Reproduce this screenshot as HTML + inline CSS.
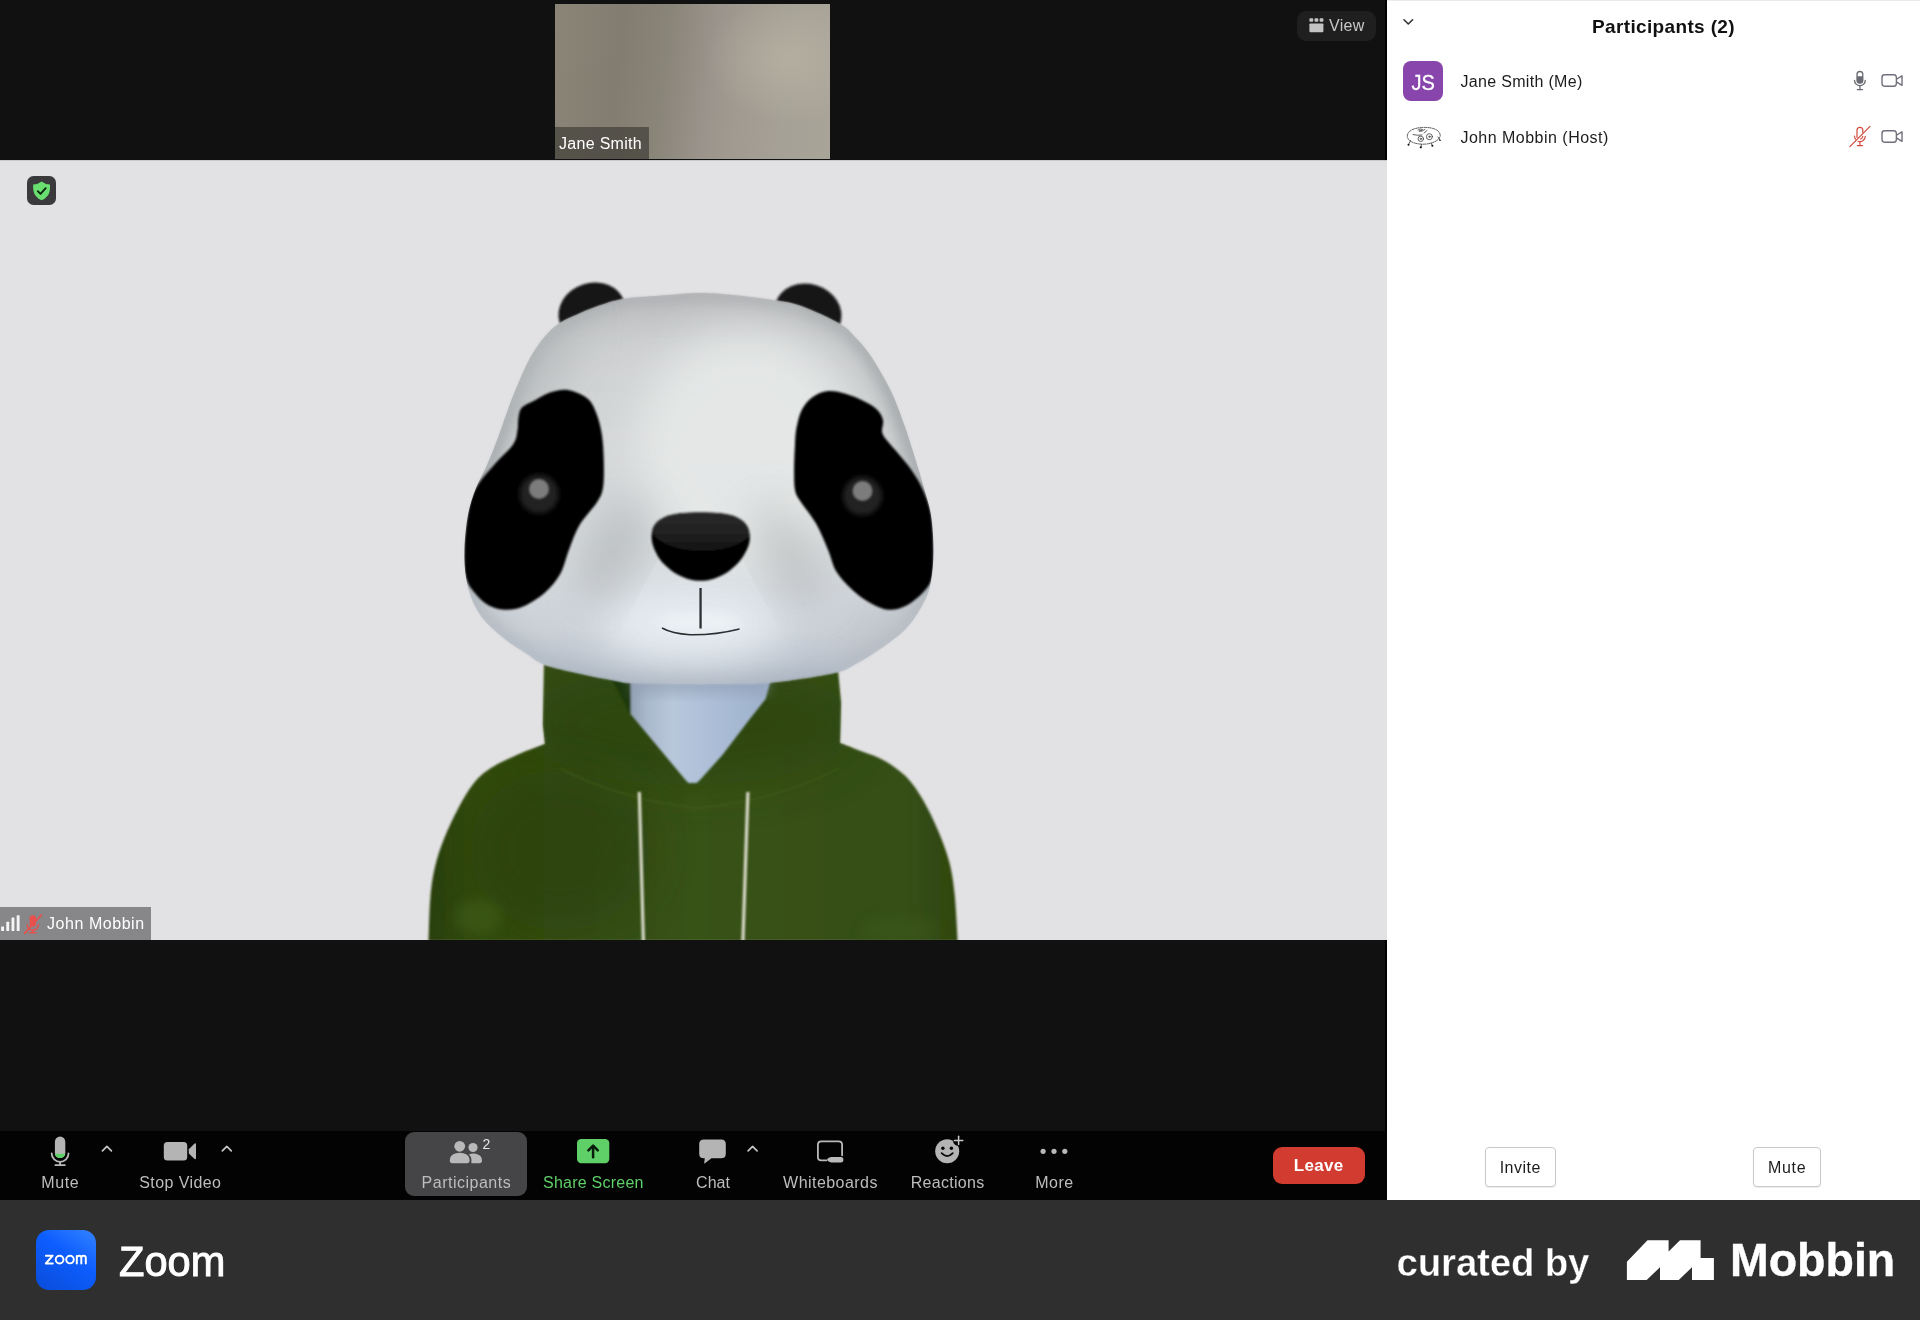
<!DOCTYPE html>
<html>
<head>
<meta charset="utf-8">
<title>Zoom</title>
<style>
*{box-sizing:border-box;margin:0;padding:0}
html,body{width:1920px;height:1320px;overflow:hidden;background:#2f2f2f;font-family:"Liberation Sans",sans-serif;}
.abs{position:absolute}
#stage,#panel,#footer,.pbtn2{will-change:transform}
#stage{position:absolute;left:0;top:0;width:1387px;height:1200px;background:#111111;overflow:hidden}
#video{position:absolute;left:0;top:160px;width:1387px;height:780px;background:#e2e1e3;overflow:hidden}
#thumb{position:absolute;left:555px;top:4px;width:275px;height:155px;background:linear-gradient(97deg,#8b8578 0%,#837d71 24%,#8a8579 40%,#9a948c 56%,#a09a90 66%,#a6a196 82%,#a9a498 100%);overflow:hidden}
#thumb .glow{position:absolute;left:150px;top:-10px;width:170px;height:130px;background:radial-gradient(ellipse at center,rgba(179,175,160,.95) 0%,rgba(179,175,160,0) 70%)}
#thumb .lbl{position:absolute;left:0;bottom:0;width:94px;height:32px;background:rgba(72,70,64,.8);color:#fff;font-size:16px;line-height:33px;padding-left:4px;white-space:nowrap;letter-spacing:.3px}
#viewbtn{position:absolute;left:1297px;top:11px;width:79px;height:30px;border-radius:9px;background:#1f1f1f;color:#c8c8c8;font-size:16px;line-height:29px}
#viewbtn span{position:absolute;left:32px;top:0;letter-spacing:.33px}
#shield{position:absolute;left:26.6px;top:176px;width:29.2px;height:29.2px;border-radius:6.5px;background:#3a3a3c}
#jm{position:absolute;left:0;top:907px;width:151px;height:33px;background:rgba(120,119,121,.86);color:#fff;font-size:16px;line-height:33px;white-space:nowrap}
#jm span{position:absolute;left:47px;top:0;letter-spacing:.55px}
#toolbar{position:absolute;left:0;top:1131px;width:1387px;height:69px;background:#030303}
.tb{position:absolute;color:#bdbdbd;font-size:16px;white-space:nowrap;line-height:18px;top:43px;transform:translateX(-50%)}
#panel{position:absolute;left:1387px;top:0;width:533px;height:1200px;background:#fff}
#footer{position:absolute;left:0;top:1200px;width:1920px;height:120px;background:#2f2f2f}

.tbi{position:absolute}
#pbtn{position:absolute;left:405px;top:1px;width:122px;height:64px;border-radius:9px;background:#454547}
#leave{position:absolute;left:1272.5px;top:15.5px;width:92.3px;height:37.5px;border-radius:9px;background:#d23b30;color:#fff;font-weight:bold;font-size:17px;line-height:37px;text-align:center;letter-spacing:.3px}
#ptitle{position:absolute;left:0;width:533px;top:15px;text-align:center;font-weight:bold;font-size:19px;line-height:24px;color:#111;white-space:nowrap;padding-left:20px;letter-spacing:.35px}
.prow{position:absolute;left:0;width:533px;height:56px}
.pname{position:absolute;left:73.5px;top:21.2px;font-size:16px;line-height:18px;color:#1c1c1e;white-space:nowrap;letter-spacing:.25px}
#av1{position:absolute;left:16px;top:8.5px;width:40px;height:40px;border-radius:8px;background:#8845ab;color:#fff;font-size:22.6px;line-height:43.4px;text-align:center;-webkit-text-stroke:.3px #fff}
#av1 span{display:inline-block;transform:scaleX(.888)}
.pbtn2{position:absolute;top:1147px;height:39.6px;border:1px solid #c9c9c9;border-radius:4px;background:#fff;font-size:16px;line-height:39.6px;text-align:center;color:#1c1c1e;box-shadow:0 1px 1px rgba(0,0,0,.08)}
#zlogo{position:absolute;left:36px;top:30px;width:60px;height:60px;border-radius:13px;background:linear-gradient(215deg,#3583ff 0%,#0d5eff 42%,#0a4cd8 100%)}
#ztext{position:absolute;left:118.5px;top:38.5px;font-size:42px;line-height:46px;color:#fff;-webkit-text-stroke:.95px #fff;transform:scaleX(.99);transform-origin:0 0}
#curated{position:absolute;left:1396.6px;top:40px;font-size:38.5px;line-height:46px;color:#fff;font-weight:bold;-webkit-text-stroke:.4px #2f2f2f;letter-spacing:-.2px;white-space:nowrap}
#mobbin{-webkit-text-stroke:.4px #fff;position:absolute;left:1729.6px;top:33.8px;font-size:47px;line-height:52px;color:#fff;font-weight:bold;white-space:nowrap;transform:scaleX(.989);transform-origin:0 0}
</style>
</head>
<body>
<div id="stage">
  <div id="thumb"><div class="glow"></div><div class="lbl">Jane Smith</div></div>
  <div id="viewbtn"><svg class="abs" style="left:11.5px;top:7px" width="16" height="16" viewBox="0 0 16 16"><g fill="#c4c4c4"><rect x=".4" y=".2" width="3.800" height="3.600" rx=".8"/><rect x="5.500" y=".2" width="3.800" height="3.600" rx=".8"/><rect x="10.600" y=".2" width="3.800" height="3.600" rx=".8"/><rect x=".4" y="5.400" width="14" height="8.800" rx=".9"/></g></svg><span>View</span></div>
  <div id="video"><div style="position:absolute;left:0;top:0;width:1387px;height:1px;background:#c9c8cb"></div></div>
  <svg id="panda" class="abs" style="left:0;top:160px" width="1387" height="780" viewBox="0 160 1387 780">
<defs>
<filter id="b05" x="-50%" y="-10%" width="200%" height="120%"><feGaussianBlur stdDeviation="0.5"/></filter>
<filter id="b1" x="-20%" y="-20%" width="140%" height="140%"><feGaussianBlur stdDeviation="0.8"/></filter>
<filter id="b2" x="-30%" y="-30%" width="160%" height="160%"><feGaussianBlur stdDeviation="2.5"/></filter>
<filter id="b6" x="-30%" y="-30%" width="160%" height="160%"><feGaussianBlur stdDeviation="6"/></filter>
<filter id="b20" x="-50%" y="-50%" width="200%" height="200%"><feGaussianBlur stdDeviation="22"/></filter>
<linearGradient id="gHead" x1="0" y1="293" x2="0" y2="684" gradientUnits="userSpaceOnUse">
<stop offset="0" stop-color="#bcbcbe"/><stop offset="0.04" stop-color="#c8c9ca"/><stop offset="0.15" stop-color="#d0d2d3"/><stop offset="0.45" stop-color="#d5d8d9"/><stop offset="0.7" stop-color="#d6dadd"/><stop offset="0.86" stop-color="#d0d6dd"/><stop offset="0.95" stop-color="#c2cbd7"/><stop offset="1" stop-color="#b2bdcc"/>
</linearGradient>
<linearGradient id="gHood" x1="428" y1="0" x2="958" y2="0" gradientUnits="userSpaceOnUse">
<stop offset="0" stop-color="#2a400c"/><stop offset="0.1" stop-color="#324b10"/><stop offset="0.5" stop-color="#385216"/><stop offset="0.9" stop-color="#364f15"/><stop offset="1" stop-color="#2f4610"/>
</linearGradient>
<linearGradient id="gNeck" x1="630" y1="0" x2="770" y2="0" gradientUnits="userSpaceOnUse">
<stop offset="0" stop-color="#92a0b3"/><stop offset="0.12" stop-color="#a9b8cc"/><stop offset="0.3" stop-color="#b8c7da"/><stop offset="0.5" stop-color="#b0c1d9"/><stop offset="0.75" stop-color="#a6b9d3"/><stop offset="1" stop-color="#9db0ca"/>
</linearGradient>
<radialGradient id="gNose" cx="703" cy="520" r="50" gradientTransform="translate(0 260) scale(1 .5)" gradientUnits="userSpaceOnUse">
<stop offset="0" stop-color="#343434"/><stop offset="0.55" stop-color="#242424"/><stop offset="0.8" stop-color="#0c0c0c"/><stop offset="1" stop-color="#000"/>
</radialGradient>
<linearGradient id="gRim" x1="0" y1="293" x2="0" y2="684" gradientUnits="userSpaceOnUse"><stop offset="0" stop-color="#b4b6b8"/><stop offset=".12" stop-color="#a6aaac"/><stop offset=".3" stop-color="#9da2a4"/><stop offset=".62" stop-color="#9fa4a7"/><stop offset=".85" stop-color="#aab3bf" stop-opacity=".7"/><stop offset="1" stop-color="#aeb9c8" stop-opacity=".45"/></linearGradient>
<clipPath id="cHead"><path d="M700.0 293.0 C710.9 292.9 719.3 293.8 732.0 295.0 C744.7 296.2 764.3 298.6 776.0 300.5 C787.7 302.4 791.3 302.7 802.0 306.6 C812.7 310.5 831.3 319.1 840.0 324.0 C848.7 328.9 849.3 331.3 854.0 336.0 C858.7 340.7 863.7 346.2 868.0 352.0 C872.3 357.8 875.8 363.8 880.0 371.0 C884.2 378.2 888.8 386.2 893.0 395.5 C897.2 404.8 901.3 416.6 905.0 427.0 C908.7 437.4 911.8 447.8 915.0 458.0 C918.2 468.2 921.3 478.5 924.0 488.0 C926.7 497.5 929.4 504.7 931.0 515.0 C932.6 525.3 933.5 539.0 933.5 550.0 C933.5 561.0 932.6 572.3 931.0 581.0 C929.4 589.7 928.1 594.2 924.0 602.0 C919.9 609.8 913.8 620.2 906.5 628.0 C899.2 635.8 888.8 642.8 880.0 649.0 C871.2 655.2 860.9 661.2 854.0 665.0 C847.1 668.8 847.3 669.7 838.6 672.0 C829.9 674.3 813.9 676.8 802.0 678.6 C790.1 680.4 780.7 682.1 767.0 683.0 C753.3 683.9 734.5 683.8 720.0 684.0 C705.5 684.2 694.7 684.2 680.0 684.0 C665.3 683.8 643.0 683.6 632.0 683.0 C621.0 682.4 622.8 682.0 614.0 680.4 C605.2 678.8 591.0 676.0 579.4 673.4 C567.8 670.8 553.2 667.9 544.5 664.7 C535.8 661.5 533.4 658.1 527.0 654.0 C520.6 649.9 513.0 645.5 506.0 640.0 C499.0 634.5 490.5 627.3 485.0 621.0 C479.5 614.7 476.2 609.2 473.0 602.0 C469.8 594.8 467.4 586.3 466.0 577.6 C464.6 568.9 464.1 560.2 464.4 549.7 C464.7 539.2 466.1 525.1 468.0 514.8 C469.9 504.5 472.8 496.3 476.0 488.0 C479.2 479.7 483.4 473.2 487.0 465.0 C490.6 456.8 494.0 448.3 497.5 439.0 C501.0 429.7 504.5 418.7 508.0 409.4 C511.5 400.1 514.6 392.0 518.4 383.3 C522.2 374.6 526.2 364.7 530.6 357.0 C535.0 349.3 539.9 342.5 544.5 337.0 C549.1 331.5 553.2 327.6 558.5 324.0 C563.8 320.4 569.6 318.2 576.0 315.3 C582.4 312.4 588.9 309.4 597.0 306.6 C605.1 303.9 613.1 300.7 624.7 298.8 C636.3 296.9 654.0 296.3 666.5 295.3 C679.0 294.3 689.1 293.1 700.0 293.0Z"/></clipPath>
<clipPath id="cHood"><path d="M544 664 L543 725 L545 744 C540.3 745.8 526.0 751.0 517.0 755.0 C508.0 759.0 498.2 763.3 491.0 768.0 C483.8 772.7 479.3 776.5 474.0 783.0 C468.7 789.5 464.0 797.7 459.0 807.0 C454.0 816.3 448.0 829.0 444.0 839.0 C440.0 849.0 437.3 857.2 435.0 867.0 C432.7 876.8 431.5 885.2 430.4 897.5 C429.3 909.8 428.9 933.8 428.6 941.0 L957.7 941 C957.2 933.0 956.0 906.3 954.5 893.0 C953.0 879.7 951.8 871.4 949.0 861.0 C946.2 850.6 942.3 840.8 938.0 830.6 C933.7 820.4 928.3 809.0 923.0 800.0 C917.7 791.0 912.5 783.2 906.0 776.6 C899.5 770.0 891.2 764.5 884.0 760.4 C876.8 756.3 870.0 754.7 862.7 751.8 C855.4 748.9 843.8 744.5 840.0 743.0 L841 703 L838 670 Z"/></clipPath>
<clipPath id="cNose"><path d="M700.5 512.5 C707.7 512.5 715.8 512.6 722.0 513.5 C728.2 514.4 733.8 515.9 738.0 518.0 C742.2 520.1 745.0 522.8 747.0 526.0 C749.0 529.2 749.6 533.5 749.8 537.0 C750.0 540.5 749.3 543.5 748.0 547.0 C746.7 550.5 744.2 554.8 742.0 558.0 C739.8 561.2 737.9 563.3 735.0 566.0 C732.1 568.7 728.3 571.8 724.5 574.0 C720.7 576.2 716.0 578.1 712.0 579.2 C708.0 580.3 704.3 580.8 700.5 580.8 C696.7 580.8 693.0 580.3 689.0 579.2 C685.0 578.1 680.3 576.2 676.5 574.0 C672.7 571.8 668.9 568.7 666.0 566.0 C663.1 563.3 661.1 561.2 659.0 558.0 C656.9 554.8 654.7 550.5 653.5 547.0 C652.3 543.5 651.5 540.5 651.6 537.0 C651.7 533.5 652.1 529.2 654.0 526.0 C655.9 522.8 658.8 520.1 663.0 518.0 C667.2 515.9 672.8 514.4 679.0 513.5 C685.2 512.6 693.3 512.5 700.5 512.5Z"/></clipPath>
<linearGradient id="gLid" x1="0" y1="512" x2="0" y2="552" gradientUnits="userSpaceOnUse"><stop offset="0" stop-color="#2a2a2a"/><stop offset=".6" stop-color="#1f1f1f"/><stop offset="1" stop-color="#101010"/></linearGradient>
<clipPath id="cVid"><rect x="0" y="160" width="1387" height="780"/></clipPath>
</defs>
<g clip-path="url(#cVid)">
<!-- ears -->
<g filter="url(#b1)">
<ellipse cx="592" cy="312" rx="34" ry="29" fill="#161416" transform="rotate(-18 592 312)"/>
<ellipse cx="808" cy="313" rx="34" ry="29" fill="#161416" transform="rotate(18 808 313)"/>
</g>
<!-- hoodie -->
<g filter="url(#b1)">
<path d="M544 664 L543 725 L545 744 C540.3 745.8 526.0 751.0 517.0 755.0 C508.0 759.0 498.2 763.3 491.0 768.0 C483.8 772.7 479.3 776.5 474.0 783.0 C468.7 789.5 464.0 797.7 459.0 807.0 C454.0 816.3 448.0 829.0 444.0 839.0 C440.0 849.0 437.3 857.2 435.0 867.0 C432.7 876.8 431.5 885.2 430.4 897.5 C429.3 909.8 428.9 933.8 428.6 941.0 L957.7 941 C957.2 933.0 956.0 906.3 954.5 893.0 C953.0 879.7 951.8 871.4 949.0 861.0 C946.2 850.6 942.3 840.8 938.0 830.6 C933.7 820.4 928.3 809.0 923.0 800.0 C917.7 791.0 912.5 783.2 906.0 776.6 C899.5 770.0 891.2 764.5 884.0 760.4 C876.8 756.3 870.0 754.7 862.7 751.8 C855.4 748.9 843.8 744.5 840.0 743.0 L841 703 L838 670 Z" fill="url(#gHood)"/>
</g>
<g clip-path="url(#cHood)">
<ellipse cx="690" cy="725" rx="170" ry="60" fill="#2c430e" opacity=".6" filter="url(#b20)"/>
<ellipse cx="560" cy="850" rx="90" ry="80" fill="#2b410c" opacity=".6" filter="url(#b20)"/>
<ellipse cx="478" cy="917" rx="24" ry="18" fill="#45621c" opacity=".5" filter="url(#b6)"/>
<ellipse cx="900" cy="930" rx="40" ry="14" fill="#415d1a" opacity=".4" filter="url(#b6)"/>
<path d="M560 768 Q620 800 698 808 Q780 800 840 768" fill="none" stroke="#4a6720" stroke-width="1.6" opacity=".45" filter="url(#b1)"/>
</g>
<!-- neck -->
<g filter="url(#b1)">
<path d="M630.5 670 L630.5 714 L685.5 780 L688.5 783 L696.500 783 L699.500 780.500 L722.4 755 L750.4 718.3 L765.6 698.9 L770 682.7 L770 670 Z" fill="url(#gNeck)"/>
<path d="M608 672 L630.5 672 L630.5 714 Z" fill="#1d3707"/>

</g>
<rect x="632" y="672" width="136" height="22" fill="#8f9cb0" opacity=".55" filter="url(#b6)"/>
<!-- drawstrings -->
<g filter="url(#b1)" fill="none" stroke="#dadccb" stroke-width="3.2">
<path d="M639.3 792 L643.4 942"/><path d="M747.9 792 L742.9 942"/>
</g>
<!-- head -->
<g filter="url(#b1)"><path d="M700.0 293.0 C710.9 292.9 719.3 293.8 732.0 295.0 C744.7 296.2 764.3 298.6 776.0 300.5 C787.7 302.4 791.3 302.7 802.0 306.6 C812.7 310.5 831.3 319.1 840.0 324.0 C848.7 328.9 849.3 331.3 854.0 336.0 C858.7 340.7 863.7 346.2 868.0 352.0 C872.3 357.8 875.8 363.8 880.0 371.0 C884.2 378.2 888.8 386.2 893.0 395.5 C897.2 404.8 901.3 416.6 905.0 427.0 C908.7 437.4 911.8 447.8 915.0 458.0 C918.2 468.2 921.3 478.5 924.0 488.0 C926.7 497.5 929.4 504.7 931.0 515.0 C932.6 525.3 933.5 539.0 933.5 550.0 C933.5 561.0 932.6 572.3 931.0 581.0 C929.4 589.7 928.1 594.2 924.0 602.0 C919.9 609.8 913.8 620.2 906.5 628.0 C899.2 635.8 888.8 642.8 880.0 649.0 C871.2 655.2 860.9 661.2 854.0 665.0 C847.1 668.8 847.3 669.7 838.6 672.0 C829.9 674.3 813.9 676.8 802.0 678.6 C790.1 680.4 780.7 682.1 767.0 683.0 C753.3 683.9 734.5 683.8 720.0 684.0 C705.5 684.2 694.7 684.2 680.0 684.0 C665.3 683.8 643.0 683.6 632.0 683.0 C621.0 682.4 622.8 682.0 614.0 680.4 C605.2 678.8 591.0 676.0 579.4 673.4 C567.8 670.8 553.2 667.9 544.5 664.7 C535.8 661.5 533.4 658.1 527.0 654.0 C520.6 649.9 513.0 645.5 506.0 640.0 C499.0 634.5 490.5 627.3 485.0 621.0 C479.5 614.7 476.2 609.2 473.0 602.0 C469.8 594.8 467.4 586.3 466.0 577.6 C464.6 568.9 464.1 560.2 464.4 549.7 C464.7 539.2 466.1 525.1 468.0 514.8 C469.9 504.5 472.8 496.3 476.0 488.0 C479.2 479.7 483.4 473.2 487.0 465.0 C490.6 456.8 494.0 448.3 497.5 439.0 C501.0 429.7 504.5 418.7 508.0 409.4 C511.5 400.1 514.6 392.0 518.4 383.3 C522.2 374.6 526.2 364.7 530.6 357.0 C535.0 349.3 539.9 342.5 544.5 337.0 C549.1 331.5 553.2 327.6 558.5 324.0 C563.8 320.4 569.6 318.2 576.0 315.3 C582.4 312.4 588.9 309.4 597.0 306.6 C605.1 303.9 613.1 300.7 624.7 298.8 C636.3 296.9 654.0 296.3 666.5 295.3 C679.0 294.3 689.1 293.1 700.0 293.0Z" fill="url(#gHead)"/></g>
<g clip-path="url(#cHead)">
<path d="M700.0 293.0 C710.9 292.9 719.3 293.8 732.0 295.0 C744.7 296.2 764.3 298.6 776.0 300.5 C787.7 302.4 791.3 302.7 802.0 306.6 C812.7 310.5 831.3 319.1 840.0 324.0 C848.7 328.9 849.3 331.3 854.0 336.0 C858.7 340.7 863.7 346.2 868.0 352.0 C872.3 357.8 875.8 363.8 880.0 371.0 C884.2 378.2 888.8 386.2 893.0 395.5 C897.2 404.8 901.3 416.6 905.0 427.0 C908.7 437.4 911.8 447.8 915.0 458.0 C918.2 468.2 921.3 478.5 924.0 488.0 C926.7 497.5 929.4 504.7 931.0 515.0 C932.6 525.3 933.5 539.0 933.5 550.0 C933.5 561.0 932.6 572.3 931.0 581.0 C929.4 589.7 928.1 594.2 924.0 602.0 C919.9 609.8 913.8 620.2 906.5 628.0 C899.2 635.8 888.8 642.8 880.0 649.0 C871.2 655.2 860.9 661.2 854.0 665.0 C847.1 668.8 847.3 669.7 838.6 672.0 C829.9 674.3 813.9 676.8 802.0 678.6 C790.1 680.4 780.7 682.1 767.0 683.0 C753.3 683.9 734.5 683.8 720.0 684.0 C705.5 684.2 694.7 684.2 680.0 684.0 C665.3 683.8 643.0 683.6 632.0 683.0 C621.0 682.4 622.8 682.0 614.0 680.4 C605.2 678.8 591.0 676.0 579.4 673.4 C567.8 670.8 553.2 667.9 544.5 664.7 C535.8 661.5 533.4 658.1 527.0 654.0 C520.6 649.9 513.0 645.5 506.0 640.0 C499.0 634.5 490.5 627.3 485.0 621.0 C479.5 614.7 476.2 609.2 473.0 602.0 C469.8 594.8 467.4 586.3 466.0 577.6 C464.6 568.9 464.1 560.2 464.4 549.7 C464.7 539.2 466.1 525.1 468.0 514.8 C469.9 504.5 472.8 496.3 476.0 488.0 C479.2 479.7 483.4 473.2 487.0 465.0 C490.6 456.8 494.0 448.3 497.5 439.0 C501.0 429.7 504.5 418.7 508.0 409.4 C511.5 400.1 514.6 392.0 518.4 383.3 C522.2 374.6 526.2 364.7 530.6 357.0 C535.0 349.3 539.9 342.5 544.5 337.0 C549.1 331.5 553.2 327.6 558.5 324.0 C563.8 320.4 569.6 318.2 576.0 315.3 C582.4 312.4 588.9 309.4 597.0 306.6 C605.1 303.9 613.1 300.7 624.7 298.8 C636.3 296.9 654.0 296.3 666.5 295.3 C679.0 294.3 689.1 293.1 700.0 293.0Z" fill="none" stroke="url(#gRim)" stroke-width="18" opacity=".75" filter="url(#b6)"/>
<path d="M700.0 293.0 C710.9 292.9 719.3 293.8 732.0 295.0 C744.7 296.2 764.3 298.6 776.0 300.5 C787.7 302.4 791.3 302.7 802.0 306.6 C812.7 310.5 831.3 319.1 840.0 324.0 C848.7 328.9 849.3 331.3 854.0 336.0 C858.7 340.7 863.7 346.2 868.0 352.0 C872.3 357.8 875.8 363.8 880.0 371.0 C884.2 378.2 888.8 386.2 893.0 395.5 C897.2 404.8 901.3 416.6 905.0 427.0 C908.7 437.4 911.8 447.8 915.0 458.0 C918.2 468.2 921.3 478.5 924.0 488.0 C926.7 497.5 929.4 504.7 931.0 515.0 C932.6 525.3 933.5 539.0 933.5 550.0 C933.5 561.0 932.6 572.3 931.0 581.0 C929.4 589.7 928.1 594.2 924.0 602.0 C919.9 609.8 913.8 620.2 906.5 628.0 C899.2 635.8 888.8 642.8 880.0 649.0 C871.2 655.2 860.9 661.2 854.0 665.0 C847.1 668.8 847.3 669.7 838.6 672.0 C829.9 674.3 813.9 676.8 802.0 678.6 C790.1 680.4 780.7 682.1 767.0 683.0 C753.3 683.9 734.5 683.8 720.0 684.0 C705.5 684.2 694.7 684.2 680.0 684.0 C665.3 683.8 643.0 683.6 632.0 683.0 C621.0 682.4 622.8 682.0 614.0 680.4 C605.2 678.8 591.0 676.0 579.4 673.4 C567.8 670.8 553.2 667.9 544.5 664.7 C535.8 661.5 533.4 658.1 527.0 654.0 C520.6 649.9 513.0 645.5 506.0 640.0 C499.0 634.5 490.5 627.3 485.0 621.0 C479.5 614.7 476.2 609.2 473.0 602.0 C469.8 594.8 467.4 586.3 466.0 577.6 C464.6 568.9 464.1 560.2 464.4 549.7 C464.7 539.2 466.1 525.1 468.0 514.8 C469.9 504.5 472.8 496.3 476.0 488.0 C479.2 479.7 483.4 473.2 487.0 465.0 C490.6 456.8 494.0 448.3 497.5 439.0 C501.0 429.7 504.5 418.7 508.0 409.4 C511.5 400.1 514.6 392.0 518.4 383.3 C522.2 374.6 526.2 364.7 530.6 357.0 C535.0 349.3 539.9 342.5 544.5 337.0 C549.1 331.5 553.2 327.6 558.5 324.0 C563.8 320.4 569.6 318.2 576.0 315.3 C582.4 312.4 588.9 309.4 597.0 306.6 C605.1 303.9 613.1 300.7 624.7 298.8 C636.3 296.9 654.0 296.3 666.5 295.3 C679.0 294.3 689.1 293.1 700.0 293.0Z" fill="none" stroke="#a5a9ab" stroke-width="40" opacity=".35" filter="url(#b20)"/>
<ellipse cx="745" cy="450" rx="110" ry="120" fill="#e6e9e8" opacity=".9" filter="url(#b20)"/>
<ellipse cx="690" cy="625" rx="90" ry="38" fill="#e8eef3" opacity=".95" filter="url(#b20)"/>
<ellipse cx="530" cy="360" rx="42" ry="80" fill="#b6babb" opacity=".6" filter="url(#b20)" transform="rotate(30 520 345)"/>
<ellipse cx="900" cy="640" rx="60" ry="40" fill="#bcbfc5" opacity=".5" filter="url(#b20)"/>
<ellipse cx="612" cy="552" rx="22" ry="58" fill="#aeb1b3" opacity=".75" filter="url(#b20)" transform="rotate(28 612 552)"/>
<ellipse cx="790" cy="556" rx="22" ry="58" fill="#b2b4b6" opacity=".7" filter="url(#b20)" transform="rotate(-28 790 556)"/>
<g filter="url(#b1)">
<path d="M569.0 390.2 C575.1 391.4 583.4 394.9 588.0 399.0 C592.6 403.1 594.5 408.5 596.8 414.6 C599.1 420.7 600.8 427.6 602.0 435.5 C603.2 443.4 603.6 453.0 603.8 461.7 C604.0 470.4 604.2 481.0 603.0 487.8 C601.8 494.6 600.7 496.4 596.8 502.6 C592.9 508.9 584.0 517.4 579.4 525.3 C574.8 533.1 572.2 541.6 569.0 549.7 C565.8 557.8 564.3 566.8 560.2 574.0 C556.1 581.2 550.6 587.6 544.5 593.0 C538.4 598.4 530.0 603.5 523.6 606.3 C517.2 609.1 512.0 609.9 506.2 609.8 C500.4 609.7 494.0 608.3 488.8 605.5 C483.6 602.7 478.6 597.6 474.8 593.0 C471.0 588.4 467.8 584.8 466.1 577.6 C464.4 570.4 464.1 560.2 464.4 549.7 C464.7 539.2 466.0 525.1 467.9 514.8 C469.8 504.5 471.6 496.3 476.0 488.0 C480.4 479.7 487.8 472.3 494.0 465.0 C500.2 457.7 509.3 450.0 513.2 444.2 C517.1 438.4 516.6 434.7 517.5 430.3 C518.4 425.9 517.7 421.8 518.4 418.0 C519.1 414.2 519.3 410.5 521.9 407.6 C524.5 404.7 529.1 403.3 534.0 400.7 C538.9 398.1 545.7 393.8 551.5 392.0 C557.3 390.2 562.9 389.0 569.0 390.2Z" fill="#000"/>
<path d="M828.1 391.1 C822.6 391.7 816.8 394.1 812.4 397.2 C808.0 400.2 804.6 404.5 802.0 409.4 C799.4 414.3 797.9 421.0 796.7 426.8 C795.5 432.6 795.4 436.9 795.0 444.2 C794.6 451.5 794.1 462.8 794.1 470.4 C794.1 478.0 794.0 484.9 795.0 490.0 C796.0 495.1 796.7 495.4 800.2 501.0 C803.7 506.6 811.4 515.5 816.0 523.6 C820.6 531.7 824.5 541.6 828.0 549.7 C831.5 557.8 832.4 565.3 836.8 572.3 C841.2 579.3 848.4 586.3 854.2 591.5 C860.0 596.7 865.9 600.7 871.7 603.7 C877.5 606.8 883.2 609.5 889.0 609.8 C894.8 610.1 900.7 608.5 906.5 605.5 C912.3 602.5 919.8 596.1 924.0 591.5 C928.2 586.9 930.2 584.6 931.8 577.6 C933.4 570.6 933.6 560.2 933.5 549.7 C933.4 539.2 932.8 524.8 931.0 514.8 C929.2 504.8 926.2 497.4 923.0 490.0 C919.8 482.6 916.0 476.6 911.8 470.4 C907.6 464.2 901.9 457.9 897.8 453.0 C893.7 448.1 890.0 444.4 887.4 441.0 C884.8 437.6 882.8 435.8 882.1 432.3 C881.4 428.8 883.9 423.7 883.0 419.9 C882.1 416.1 880.2 412.6 876.9 409.4 C873.6 406.2 868.2 403.3 863.0 400.7 C857.8 398.1 851.3 395.3 845.5 393.7 C839.7 392.1 833.6 390.5 828.1 391.1Z" fill="#000"/>
</g>
<circle cx="539" cy="494" r="19.5" fill="#242322" filter="url(#b2)"/>
<circle cx="862.5" cy="496" r="19.5" fill="#242322" filter="url(#b2)"/>
<circle cx="539" cy="489" r="10" fill="#7c7c7c" filter="url(#b1)"/>
<circle cx="862.5" cy="491" r="10" fill="#7c7c7c" filter="url(#b1)"/>
<g filter="url(#b1)">
<path d="M700.5 512.5 C707.7 512.5 715.8 512.6 722.0 513.5 C728.2 514.4 733.8 515.9 738.0 518.0 C742.2 520.1 745.0 522.8 747.0 526.0 C749.0 529.2 749.6 533.5 749.8 537.0 C750.0 540.5 749.3 543.5 748.0 547.0 C746.7 550.5 744.2 554.8 742.0 558.0 C739.8 561.2 737.9 563.3 735.0 566.0 C732.1 568.7 728.3 571.8 724.5 574.0 C720.7 576.2 716.0 578.1 712.0 579.2 C708.0 580.3 704.3 580.8 700.5 580.8 C696.7 580.8 693.0 580.3 689.0 579.2 C685.0 578.1 680.3 576.2 676.5 574.0 C672.7 571.8 668.9 568.7 666.0 566.0 C663.1 563.3 661.1 561.2 659.0 558.0 C656.9 554.8 654.7 550.5 653.5 547.0 C652.3 543.5 651.5 540.5 651.6 537.0 C651.7 533.5 652.1 529.2 654.0 526.0 C655.9 522.8 658.8 520.1 663.0 518.0 C667.2 515.9 672.8 514.4 679.0 513.5 C685.2 512.6 693.3 512.5 700.5 512.5Z" fill="#000"/>
<g clip-path="url(#cNose)"><ellipse cx="702" cy="527" rx="51" ry="24" fill="url(#gLid)" filter="url(#b1)"/></g>
</g>
<ellipse cx="700" cy="622" rx="42" ry="9" fill="#f4f7f9" opacity=".55" filter="url(#b6)"/>
<rect x="699.400" y="588" width="2.300" height="40.500" fill="#2c3035" filter="url(#b05)"/>
<path d="M662 628 Q672 633.500 690 634.800 Q715 635.200 739.5 629" stroke="#2a2e33" stroke-width="1.500" fill="none" filter="url(#b05)"/>
</g>
</g>
</svg>
  <div id="shield"><svg class="abs" style="left:-.6px;top:0" width="30" height="30" viewBox="26 176 30 30"><path d="M41.600 181.400 Q44.600 184 50 184.400 Q50.600 192 47.400 196 Q45 199 41.600 200.300 Q38.200 199 35.800 196 Q32.600 192 33.200 184.400 Q38.600 184 41.600 181.400Z" fill="#69df70"/><path d="M37.800 191.200 L40.500 193.900 L45.700 188.200" fill="none" stroke="#0b260d" stroke-width="1.900" stroke-linecap="round" stroke-linejoin="round"/></svg></div>
  <div id="jm"><svg class="abs" style="left:0;top:0" width="46" height="33" viewBox="0 907 46 33"><g fill="#f4f4f4"><rect x="1.100" y="926.600" width="2.900" height="4.300" rx=".5"/><rect x="6.300" y="921.700" width="2.900" height="9.200" rx=".5"/><rect x="11.500" y="917.600" width="2.900" height="13.300" rx=".5"/><rect x="16.700" y="915.300" width="2.900" height="15.600" rx=".5"/></g><g fill="none" stroke="#e8504e" stroke-linecap="round"><rect x="29.600" y="915.200" width="6.400" height="11.600" rx="3.200" fill="#e8504e" stroke="none"/><path d="M27.200 924.600 a5.600 5.600 0 0 0 11.200 0" stroke-width="1.400"/><path d="M32.800 930.400 v2" stroke-width="1.400"/><path d="M29.800 932.800 h6" stroke-width="1.400"/><path d="M24.800 933.200 L41.400 915" stroke-width="1.800"/></g></svg><span>John Mobbin</span></div>
  <div style="position:absolute;left:1385px;top:0;width:2px;height:160px;background:#000"></div><div style="position:absolute;left:1385px;top:940px;width:2px;height:191px;background:#000"></div>
  <div id="toolbar">
    <div id="pbtn"></div>
    <svg class="tbi" style="left:0;top:0" width="1387" height="69" viewBox="0 1131 1387 69">
      <!-- mic -->
      <g fill="none" stroke="#b9b9b9" stroke-width="1.8" stroke-linecap="round">
        <path d="M51.7 1153.5 a8.4 8.4 0 0 0 16.8 0"/><path d="M60.1 1162 v3.2"/><path d="M55.4 1165.2 h9.4"/>
      </g>
      <rect x="54.9" y="1136.6" width="10.4" height="21.4" rx="5.2" fill="#b4b4b4"/>
      <path d="M54.9 1153.7 h10.4 a5.2 4.4 0 0 1 -10.4 0z" fill="#5fd068"/>
      <!-- chevrons -->
      <g fill="none" stroke="#c4c4c4" stroke-width="1.7" stroke-linecap="round" stroke-linejoin="round">
        <path d="M102.4 1150.9 l4.5 -4.6 l4.5 4.6"/>
        <path d="M222.3 1150.9 l4.5 -4.6 l4.5 4.6"/>
        <path d="M748.1 1150.9 l4.5 -4.6 l4.5 4.6"/>
      </g>
      <!-- video -->
      <rect x="163.8" y="1142" width="23.4" height="18.6" rx="3.6" fill="#b4b4b4"/>
      <path d="M188.8 1149.2 L194.3 1143.8 Q196 1142.6 196 1144.6 V1158 Q196 1160 194.3 1158.8 L188.8 1153.6Z" fill="#b4b4b4"/>
      <!-- participants -->
      <g fill="#b9b9b9">
        <circle cx="459.7" cy="1146.3" r="5.4"/><circle cx="473" cy="1147.5" r="4.6"/>
        <path d="M449.8 1160.6 q0 -6.2 6.2 -7.4 q3.7 -.7 7.4 0 q6.2 1.2 6.2 7.4 q0 2.6 -2.6 2.6 h-14.6 q-2.600 0 -2.600 -2.600z"/>
        <path d="M471.4 1163.200 v-3.6 q-.2 -3.400 -2.500 -5.2 q3.200 -1.200 6.800 -.6 q6.300 1.200 6.300 6.800 q0 2.600 -2.600 2.600z"/>
      </g>
      <text x="482.600" y="1148.700" font-family="Liberation Sans, sans-serif" font-size="14" fill="#e6e6e6">2</text>
      <!-- share -->
      <rect x="577" y="1139" width="32.300" height="24.300" rx="4.2" fill="#5fd068"/>
      <g fill="none" stroke="#0a1a0b" stroke-width="2.500" stroke-linecap="round" stroke-linejoin="round">
        <path d="M593.100 1157.200 v-11"/><path d="M588.400 1150.400 l4.700 -4.700 l4.700 4.700"/>
      </g>
      <!-- chat -->
      <path d="M703.800 1139.500 h17.400 q4.600 0 4.600 4.600 v9.600 q0 4.600 -4.600 4.600 h-9.800 l-6.400 5 q-.8 .6 -.8 -.4 l.6 -4.600 h-1 q-4.600 0 -4.600 -4.600 v-9.600 q0 -4.600 4.600 -4.600z" fill="#b4b4b4"/>
      <!-- whiteboard -->
      <path d="M826.500 1160.300 h-5.200 q-3.400 0 -3.400 -3.400 v-12.200 q0 -3.400 3.400 -3.400 h17.400 q3.400 0 3.400 3.400 v10.600" fill="none" stroke="#b9b9b9" stroke-width="1.800" stroke-linecap="round"/>
      <path d="M827 1159.600 q1.200 -2.600 4.800 -2.600 h9.200 q2.400 0 2.400 2.700 q0 2.700 -2.400 2.700 h-9.200 q-3.600 0 -4.800 -2.800z" fill="#b9b9b9"/>
      <!-- reactions -->
      <circle cx="947.200" cy="1151.300" r="12" fill="#b4b4b4"/>
      <circle cx="942.900" cy="1148.200" r="1.700" fill="#050505"/><circle cx="951.400" cy="1148.200" r="1.700" fill="#050505"/>
      <path d="M941.600 1153.200 q5.600 5.800 11.200 0" fill="none" stroke="#050505" stroke-width="1.700" stroke-linecap="round"/>
      <circle cx="958.600" cy="1140.400" r="5.600" fill="#030303"/>
      <g stroke="#c8c8c8" stroke-width="1.500" stroke-linecap="round"><path d="M958.600 1136.200 v8.400"/><path d="M954.400 1140.400 h8.400"/></g>
      <!-- more -->
      <g fill="#b9b9b9"><circle cx="1043.100" cy="1151.300" r="2.600"/><circle cx="1054" cy="1151.300" r="2.600"/><circle cx="1064.800" cy="1151.300" r="2.600"/></g>
    </svg>
    <div id="leave">Leave</div>

    <div class="tb" style="left:60.3px;letter-spacing:.6px">Mute</div>
    <div class="tb" style="left:180.3px;letter-spacing:.42px">Stop Video</div>
    <div class="tb" style="left:466.4px;letter-spacing:.5px">Participants</div>
    <div class="tb" style="left:593.4px;color:#5fd068;letter-spacing:.23px">Share Screen</div>
    <div class="tb" style="left:713px">Chat</div>
    <div class="tb" style="left:830.5px;letter-spacing:.45px">Whiteboards</div>
    <div class="tb" style="left:947.6px;letter-spacing:.3px">Reactions</div>
    <div class="tb" style="left:1054.4px;letter-spacing:.5px">More</div>
  </div>
</div>
<div id="panel">
  <div style="position:absolute;left:0;top:0;width:533px;height:1px;background:#ebebeb"></div>
  <svg class="abs" style="left:15px;top:17px" width="14" height="10" viewBox="0 0 14 10"><path d="M2 2.800 L6.300 7 L10.600 2.800" fill="none" stroke="#333" stroke-width="1.600" stroke-linecap="round" stroke-linejoin="round"/></svg>
  <div id="ptitle">Participants (2)</div>
  <div class="prow" style="top:52px">
    <div id="av1"><span>JS</span></div>
    <div class="pname" style="letter-spacing:.31px">Jane Smith (Me)</div>
  </div>
  <div class="prow" style="top:108px">
    <svg class="abs" style="left:16px;top:12px" width="42" height="34" viewBox="1403 120 42 34">
      <g fill="none" stroke="#3a3a3a" stroke-width=".8" stroke-linecap="round">
        <path d="M1408 1137" />
        <path d="M1407.300 136.500 C1407 130 1416 127.500 1424 127.400 C1432 127.300 1439.500 129.500 1440.200 135 C1440.800 140 1432 144.300 1423 144.200 C1414 144.100 1407.600 141 1407.300 136.500Z" stroke-dasharray="3 1.200"/>
        <circle cx="1420.800" cy="138.800" r="2.700"/><circle cx="1429.400" cy="136.700" r="3"/>
        <circle cx="1420.800" cy="138.800" r=".7"/><circle cx="1429.400" cy="136.700" r=".7"/>
        <path d="M1413 134.600 q5 1.200 9 .4"/>
        <path d="M1418 130 q2 -2 4.500 -.5 q-1 2 -3.500 1.500 q3 1 6 -1.500"/>
        <path d="M1424 133 l3 -2.500"/>
        <path d="M1410.500 140.500 l-1.800 4"/><path d="M1421.500 144.400 l-.5 2.600"/><path d="M1431 143 l1.200 2.400"/><path d="M1438 137 l1.800 3"/>
      </g>
      <g fill="#111"><circle cx="1408.500" cy="144.800" r="1"/><circle cx="1420.800" cy="147.300" r="1.100"/><circle cx="1432.400" cy="145.700" r="1"/><circle cx="1440" cy="140.300" r=".8"/></g>
    </svg>
    <div class="pname" style="letter-spacing:.48px">John Mobbin (Host)</div>
  </div>
  <svg class="abs" style="left:453px;top:60px" width="80" height="100" viewBox="1840 60 80 100">
    <g id="cam1" fill="none" stroke="#70707c" stroke-width="1.400" stroke-linejoin="round">
      <rect x="1882" y="74.800" width="14.400" height="11.400" rx="2.600"/>
      <path d="M1896.800 79 L1902 75.800 V85.400 L1896.800 82.200"/>
    </g>
    <g fill="none" stroke="#70707c" stroke-width="1.400" stroke-linejoin="round" transform="translate(0 56)">
      <rect x="1882" y="74.800" width="14.400" height="11.400" rx="2.600"/>
      <path d="M1896.800 79 L1902 75.800 V85.400 L1896.800 82.200"/>
    </g>
    <!-- mic on -->
    <g fill="none" stroke="#6a6a74" stroke-width="1.300" stroke-linecap="round">
      <rect x="1857" y="71.500" width="5.800" height="11.600" rx="2.900"/>
      <path d="M1854.500 80.300 a5.400 5.400 0 0 0 10.800 0"/><path d="M1859.900 85.800 v3.400"/><path d="M1857.300 89.600 h5.200"/>
    </g>
    <path d="M1857 76.300 h5.800 v4 a2.900 2.900 0 0 1 -5.800 0z" fill="#6a6a74"/>
    <!-- mic muted -->
    <g fill="none" stroke="#d24a3e" stroke-width="1.200" stroke-linecap="round">
      <path d="M1857 137.500 v-7.200 a2.900 2.900 0 0 1 5.800 0 v2"/>
      <path d="M1854.500 136 q.1 2 1 3.200"/><path d="M1865.300 136.300 a5.400 5.400 0 0 1 -7.300 5"/>
      <path d="M1862.800 136.300 a2.900 2.900 0 0 1 -2.200 2.800"/>
      <path d="M1859.900 141.800 v3.400"/><path d="M1857.300 145.600 h5.200"/>
      <path d="M1849.900 146.700 L1870 126.400"/>
    </g>
  </svg>
</div>
<div class="pbtn2" style="left:1485px;width:71px;letter-spacing:.5px;text-indent:-.5px">Invite</div>
<div class="pbtn2" style="left:1753px;width:68.300px;letter-spacing:.7px">Mute</div>
<div id="footer">
  <div id="zlogo">
    <svg class="abs" style="left:0;top:0" width="60" height="60" viewBox="36 1230 60 60">
      <g fill="none" stroke="#fff" stroke-width="1.950" stroke-linecap="round" stroke-linejoin="round">
        <path d="M45.900 1255.700 h6.800 l-6.900 7.800 h7"/>
        <circle cx="59.600" cy="1259.600" r="3.900"/>
        <circle cx="70" cy="1259.600" r="3.800"/>
        <path d="M76.800 1263.500 v-7.600 M76.800 1258 a2.250 2.250 0 0 1 4.500 0 v5.500 M81.300 1258 a2.250 2.250 0 0 1 4.500 0 v5.500"/>
      </g>
    </svg>
  </div>
  <div id="ztext">Zoom</div>
  <div id="curated">curated by</div>
  <svg class="abs" style="left:1626px;top:39px" width="90" height="43" viewBox="1626 1239 90 43"><path d="M1626.900 1280 V1261.700 L1647.500 1240.200 H1668.600 V1251.600 L1680 1240.200 H1700.600 V1258.100 H1713.900 V1280 H1692 V1267.200 L1678.750 1280 H1660 V1267.200 L1646.700 1280 Z" fill="#fff"/></svg>
  <div id="mobbin">Mobbin</div>
</div>
</body>
</html>
